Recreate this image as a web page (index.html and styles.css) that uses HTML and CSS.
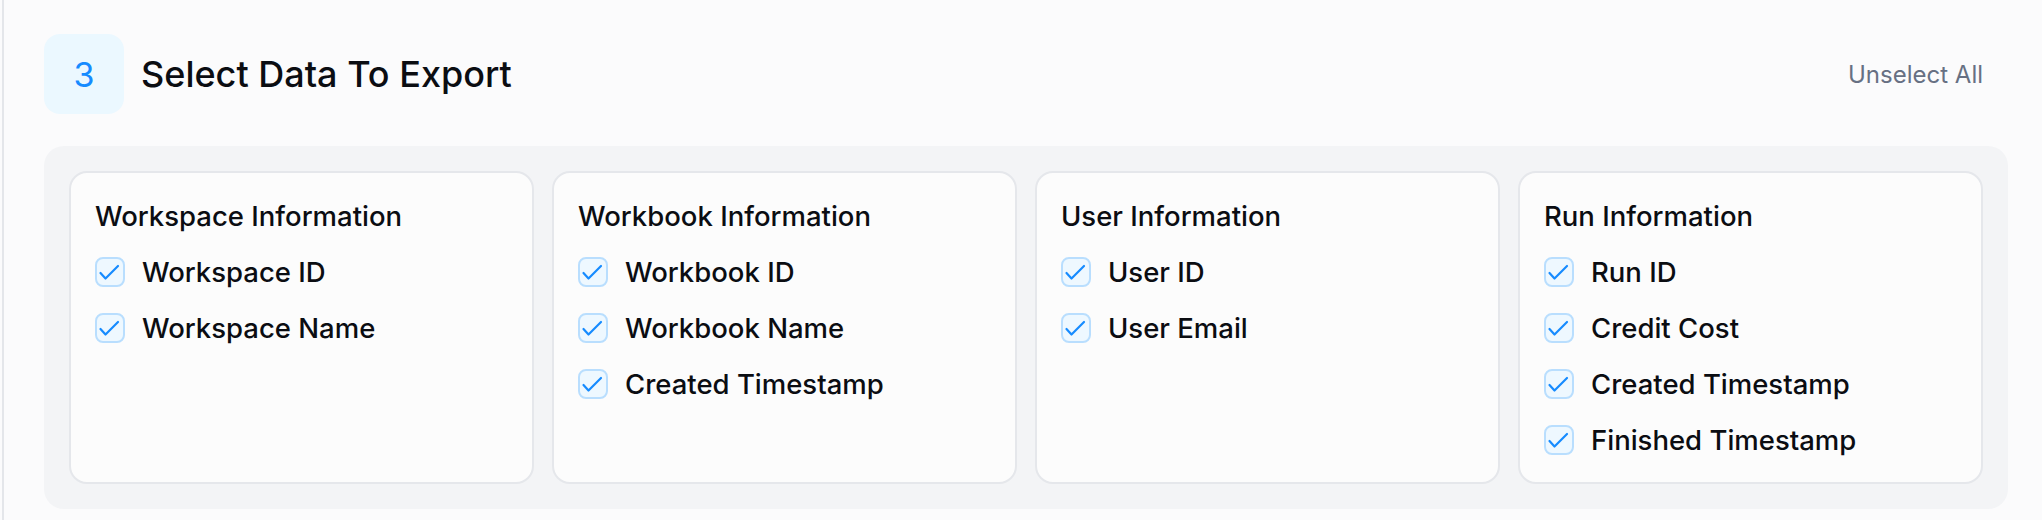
FILE: index.html
```html
<!DOCTYPE html>
<html lang="en">
<head>
    <meta charset="UTF-8">
    <meta name="viewport" content="width=device-width, initial-scale=1.0">
    <title>Export Data</title>
    <link rel="stylesheet" href="styles.css">
</head>
<body>
    <section class="step">
        <div class="step-header">
            <div class="step-num">3</div>
            <h2 class="step-title">Select Data To Export</h2>
            <button class="unselect-btn">Unselect All</button>
        </div>

        <div class="groups">
            <div class="group">
                <h3 class="group-title">Workspace Information</h3>
                <label class="item"><span class="check"><svg viewBox="0 0 26 26"><polyline points="3.5,14 8.5,19.5 21,7"/></svg></span>Workspace ID</label>
                <label class="item"><span class="check"><svg viewBox="0 0 26 26"><polyline points="3.5,14 8.5,19.5 21,7"/></svg></span>Workspace Name</label>
            </div>
            <div class="group">
                <h3 class="group-title">Workbook Information</h3>
                <label class="item"><span class="check"><svg viewBox="0 0 26 26"><polyline points="3.5,14 8.5,19.5 21,7"/></svg></span>Workbook ID</label>
                <label class="item"><span class="check"><svg viewBox="0 0 26 26"><polyline points="3.5,14 8.5,19.5 21,7"/></svg></span>Workbook Name</label>
                <label class="item"><span class="check"><svg viewBox="0 0 26 26"><polyline points="3.5,14 8.5,19.5 21,7"/></svg></span>Created Timestamp</label>
            </div>
            <div class="group">
                <h3 class="group-title">User Information</h3>
                <label class="item"><span class="check"><svg viewBox="0 0 26 26"><polyline points="3.5,14 8.5,19.5 21,7"/></svg></span>User ID</label>
                <label class="item"><span class="check"><svg viewBox="0 0 26 26"><polyline points="3.5,14 8.5,19.5 21,7"/></svg></span>User Email</label>
            </div>
            <div class="group">
                <h3 class="group-title">Run Information</h3>
                <label class="item"><span class="check"><svg viewBox="0 0 26 26"><polyline points="3.5,14 8.5,19.5 21,7"/></svg></span>Run ID</label>
                <label class="item"><span class="check"><svg viewBox="0 0 26 26"><polyline points="3.5,14 8.5,19.5 21,7"/></svg></span>Credit Cost</label>
                <label class="item"><span class="check"><svg viewBox="0 0 26 26"><polyline points="3.5,14 8.5,19.5 21,7"/></svg></span>Created Timestamp</label>
                <label class="item"><span class="check"><svg viewBox="0 0 26 26"><polyline points="3.5,14 8.5,19.5 21,7"/></svg></span>Finished Timestamp</label>
            </div>
        </div>
    </section>
</body>
</html>
```

FILE: styles.css
```css
*{
    margin: 0;
    padding: 0;
    box-sizing: border-box;
}

body{
    background-color: #fbfbfc;
    font-family: Inter, "Noto Sans", sans-serif;
    color: #0b0d12;
    padding-left: 2px;
}

.step{
    border-left: 2px solid #e4e6ea;
    min-height: 520px;
    padding: 34px 34px 0 40px;
}

.step-header{
    display: flex;
    align-items: center;
    gap: 17px;
    margin-bottom: 32px;
}

.step-num{
    width: 80px;
    height: 80px;
    border-radius: 16px;
    background-color: #ebf8ff;
    color: #168bff;
    font-size: 34px;
    display: flex;
    justify-content: center;
    align-items: center;
}

.step-title{
    font-size: 36px;
    font-weight: 500;
    flex: 1;
}

.unselect-btn{
    background: none;
    border: none;
    font-family: inherit;
    font-size: 24px;
    color: #677083;
    padding: 0 25px;
    cursor: pointer;
}

.groups{
    background-color: #f3f4f6;
    border-radius: 20px;
    padding: 25px;
    display: grid;
    grid-template-columns: repeat(4, 1fr);
    gap: 18px;
}

.group{
    background-color: #fcfcfc;
    border: 2px solid #e5e7eb;
    border-radius: 18px;
    padding: 25px 24px 24px;
    display: flex;
    flex-direction: column;
    gap: 20px;
}

.group-title{
    font-size: 27.5px;
    font-weight: 500;
    line-height: 36px;
}

.item{
    display: flex;
    align-items: center;
    gap: 17px;
    height: 36px;
    font-size: 27.5px;
    font-weight: 500;
}

.check{
    width: 30px;
    height: 30px;
    border: 2px solid #b9defe;
    border-radius: 8px;
    background-color: #eef8ff;
    display: flex;
    flex-shrink: 0;
}

.check svg{
    width: 100%;
    height: 100%;
    fill: none;
    stroke: #168bff;
    stroke-width: 2.2;
    stroke-linecap: round;
    stroke-linejoin: round;
}
```
